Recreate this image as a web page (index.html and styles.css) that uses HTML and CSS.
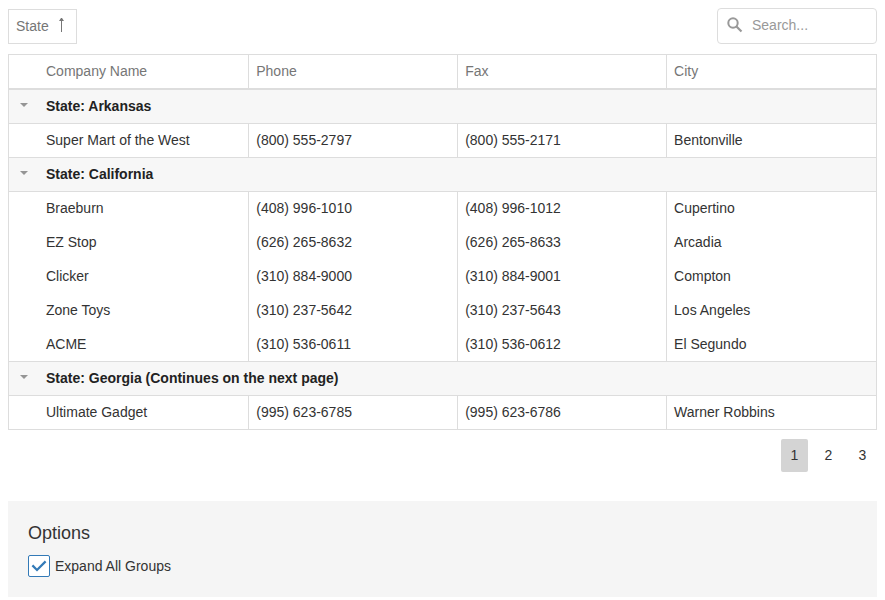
FILE: index.html
```html
<!DOCTYPE html>
<html lang="en">
<head>
<meta charset="utf-8">
<title>Customers</title>
<link rel="stylesheet" href="styles.css">
</head>
<body>
<main>
  <div class="toolbar">
    <button type="button" class="group-field">State
      <svg class="sort-icon" width="9" height="16" viewBox="0 0 9 16" aria-hidden="true"><path d="M4 1h1v14H4z" fill="#767676"/><path d="M4 1h1l2 3H2z" fill="#767676"/></svg>
    </button>
    <div class="search">
      <svg width="16" height="16" viewBox="0 0 16 16" aria-hidden="true"><circle cx="6" cy="6" r="4.7" fill="none" stroke="#999" stroke-width="2"/><path d="M9.5 9.5L14.5 14.5" stroke="#999" stroke-width="2.2"/></svg>
      <input type="search" aria-label="Search" placeholder="Search...">
    </div>
  </div>

  <table class="grid">
    <colgroup><col class="expand-col"><col class="name-col"><col><col><col></colgroup>
    <thead>
      <tr><td></td><th scope="col">Company Name</th><th scope="col">Phone</th><th scope="col">Fax</th><th scope="col">City</th></tr>
    </thead>
    <tbody>
      <tr class="group"><td><button type="button" class="toggle" aria-label="Collapse Arkansas"></button></td><th colspan="4">State: Arkansas</th></tr>
      <tr><td></td><td>Super Mart of the West</td><td>(800) 555-2797</td><td>(800) 555-2171</td><td>Bentonville</td></tr>
    </tbody>
    <tbody>
      <tr class="group"><td><button type="button" class="toggle" aria-label="Collapse California"></button></td><th colspan="4">State: California</th></tr>
      <tr><td></td><td>Braeburn</td><td>(408) 996-1010</td><td>(408) 996-1012</td><td>Cupertino</td></tr>
      <tr><td></td><td>EZ Stop</td><td>(626) 265-8632</td><td>(626) 265-8633</td><td>Arcadia</td></tr>
      <tr><td></td><td>Clicker</td><td>(310) 884-9000</td><td>(310) 884-9001</td><td>Compton</td></tr>
      <tr><td></td><td>Zone Toys</td><td>(310) 237-5642</td><td>(310) 237-5643</td><td>Los Angeles</td></tr>
      <tr><td></td><td>ACME</td><td>(310) 536-0611</td><td>(310) 536-0612</td><td>El Segundo</td></tr>
    </tbody>
    <tbody>
      <tr class="group"><td><button type="button" class="toggle" aria-label="Collapse Georgia"></button></td><th colspan="4">State: Georgia (Continues on the next page)</th></tr>
      <tr><td></td><td>Ultimate Gadget</td><td>(995) 623-6785</td><td>(995) 623-6786</td><td>Warner Robbins</td></tr>
    </tbody>
  </table>

  <nav class="pager" aria-label="Pages">
    <button type="button" class="page current" aria-current="page">1</button>
    <button type="button" class="page">2</button>
    <button type="button" class="page">3</button>
  </nav>

  <section class="options">
    <h2>Options</h2>
    <label class="check">
      <span class="box">
        <input type="checkbox" checked>
        <svg width="22" height="22" viewBox="0 0 22 22" aria-hidden="true"><path d="M4.4 10.4L9 15L17.6 6.4" fill="none" stroke="#337ab7" stroke-width="2.2"/></svg>
      </span>
      <span>Expand All Groups</span>
    </label>
  </section>
</main>
</body>
</html>
```

FILE: styles.css
```css
* { box-sizing: border-box; }

body {
  margin: 8px;
  background: #fff;
  color: #333;
  font: 14px/19px "Liberation Sans", Arial, sans-serif;
}

button, input { font: inherit; color: inherit; }

.toolbar {
  display: flex;
  align-items: flex-end;
  justify-content: space-between;
  margin-bottom: 10px;
}

.group-field {
  display: flex;
  align-items: center;
  gap: 8px;
  height: 35px;
  padding: 0 10px 0 7px;
  border: 1px solid #ddd;
  background: #fff;
  color: #767676;
}

.sort-icon { margin-bottom: 4px; }

.search {
  display: flex;
  align-items: center;
  gap: 9px;
  width: 160px;
  height: 36px;
  padding: 0 9px 2px;
  border: 1px solid #ddd;
  border-radius: 4px;
}

.search svg { flex: none; }

.search input {
  flex: 1;
  min-width: 0;
  padding: 0;
  border: 0;
  outline: 0;
  background: none;
}

.search input::placeholder { color: #999; }

.grid {
  width: 100%;
  table-layout: fixed;
  border: 1px solid #ddd;
  border-collapse: separate;
  border-spacing: 0;
}

.expand-col { width: 30px; }
.name-col { width: 24.25%; }

.grid th, .grid td {
  height: 34px;
  padding: 7px 7px 0;
  text-align: left;
  vertical-align: top;
  font-weight: normal;
}

.grid :is(th, td):not(:first-child, :last-child) { border-right: 1px solid #ddd; }

.grid thead th, .grid thead td {
  height: 35px;
  border-bottom: 2px solid #ddd;
  color: #767676;
}

.grid tbody .group th, .grid tbody .group td {
  border-bottom: 1px solid #ddd;
  background: #f7f7f7;
  color: #222;
  font-weight: bold;
}

.grid tbody:not(:last-child) tr:last-child td { border-bottom: 1px solid #ddd; }
.grid tbody:last-child tr:last-child td { height: 33px; }

.grid .group td { padding: 0; }

.toggle {
  display: flex;
  align-items: center;
  justify-content: center;
  width: 30px;
  height: 30px;
  padding: 0;
  border: 0;
  background: none;
}

.toggle::before {
  content: "";
  border: 4px solid transparent;
  border-top-color: #959595;
  border-bottom-width: 0;
}

.pager {
  display: flex;
  justify-content: flex-end;
  gap: 7px;
  margin: 9px 1px 29px;
}

.page {
  width: 27px;
  height: 33px;
  padding: 0;
  border: 0;
  border-radius: 2px;
  background: none;
}

.page.current { background: #d4d4d4; }

.options {
  padding: 20px;
  background: #f5f5f5;
}

.options h2 {
  margin: 0 0 10px;
  font-size: 18px;
  line-height: 24px;
  font-weight: normal;
}

.check {
  display: flex;
  align-items: center;
  gap: 5px;
}

.box { display: grid; }
.box > * { grid-area: 1 / 1; }
.box svg { pointer-events: none; }

.box input {
  appearance: none;
  width: 22px;
  height: 22px;
  margin: 0;
  border: 1px solid #337ab7;
  border-radius: 2px;
  background: #fff;
}

.box input:not(:checked) + svg { visibility: hidden; }
```
